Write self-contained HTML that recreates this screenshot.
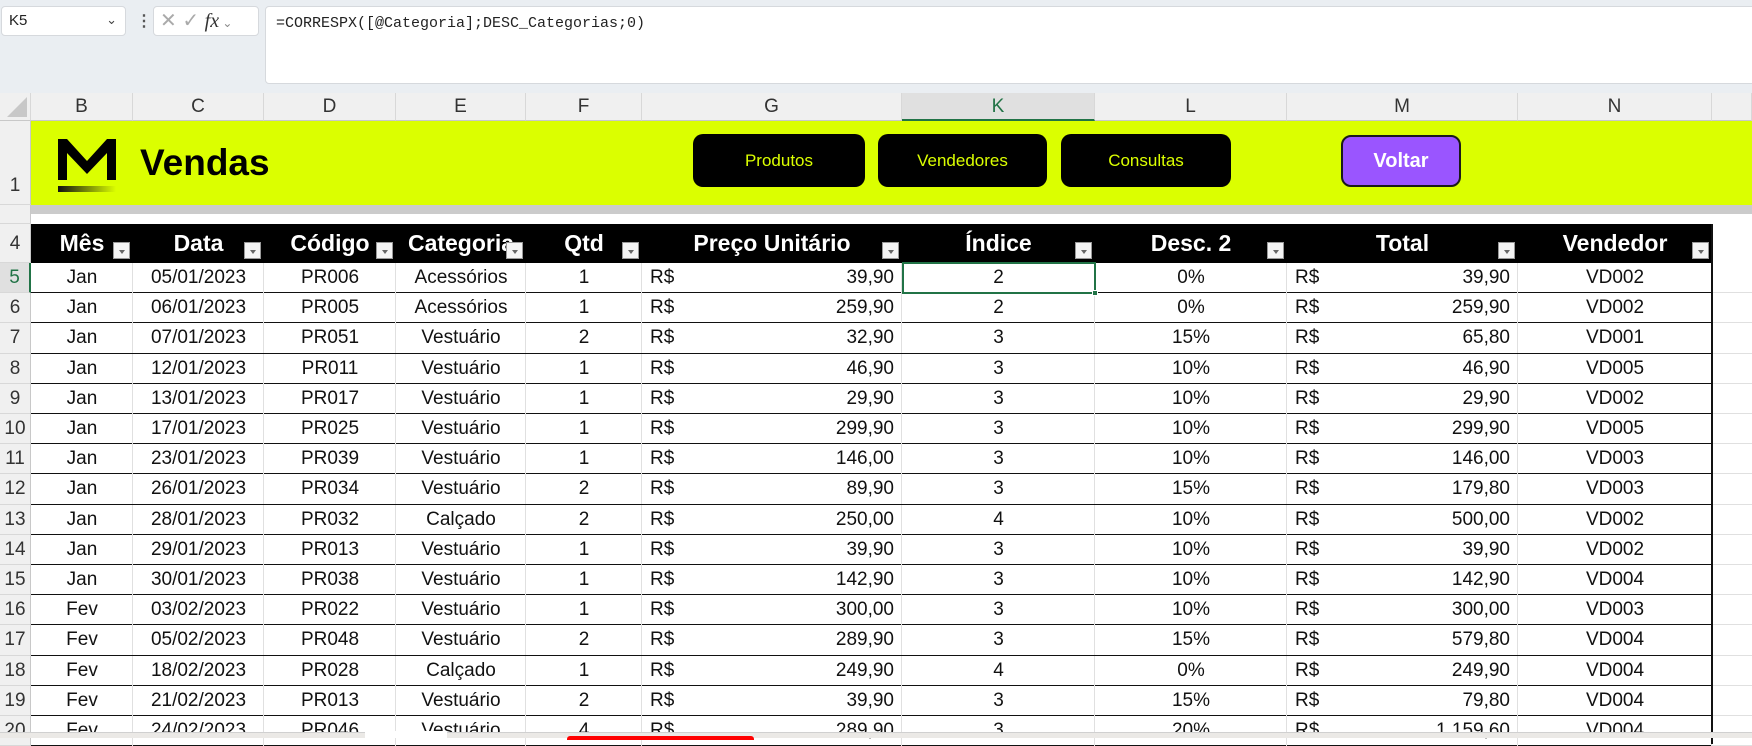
<!DOCTYPE html>
<html><head><meta charset="utf-8"><style>
*{box-sizing:border-box;margin:0;padding:0}
body{width:1752px;height:738px;overflow:hidden;background:#fff;font-family:"Liberation Sans",sans-serif;position:relative}
.a{position:absolute}
.top{left:0;top:0;width:1752px;height:93px;background:#eaeef2}
.box{background:#fff;border:1px solid #d6d9dd;border-radius:4px}
.ch{top:93px;height:28px;background:#f0f0f0;border-bottom:1px solid #c8c8c8;border-right:1px solid #d8d8d8;font-size:19px;color:#333;text-align:center;line-height:28px}
.rh{left:0;width:31px;background:#f0f0f0;border-right:1px solid #c8c8c8;border-bottom:1px solid #d8d8d8;font-size:19px;color:#333;text-align:center}
.btn{top:134px;height:53px;background:#000;border-radius:10px;color:#dbff00;font-size:17px;text-align:center;line-height:53px}
.hd{top:224px;height:39px;background:#000;color:#fff;font-weight:bold;font-size:23px;line-height:39px;text-align:center}
.fl{width:17px;height:17px;background:#f4f4f4;border:1px solid #999;top:18px}
.fl:after{content:"";position:absolute;left:5px;top:7px;border-left:3px solid transparent;border-right:3px solid transparent;border-top:4px solid #666}
.c{font-size:19px;color:#111;line-height:30px;text-align:center;height:30px}
</style></head><body>
<div class="a top"></div>
<div class="a box" style="left:1px;top:6px;width:125px;height:30px;font-size:15px;line-height:28px;padding-left:7px;color:#222">K5<span style="position:absolute;right:8px;top:-1px;font-size:13px;color:#444">&#8964;</span></div>
<div class="a" style="left:136px;top:11px;font-size:16px;color:#555;font-weight:bold">&#8942;</div>
<div class="a box" style="left:153px;top:6px;width:106px;height:30px;color:#aaa;font-size:20px;line-height:28px;padding-left:6px">&#10005; &#10003; <i style="color:#333;font-family:'Liberation Serif',serif;font-size:20px">fx</i><span style="font-size:12px;color:#888"> &#8964;</span></div>
<div class="a box" style="left:265px;top:6px;width:1500px;height:78px;border-radius:4px 0 0 4px;font-family:'Liberation Mono',monospace;font-size:15px;padding:8px 10px;color:#222">=CORRESPX([@Categoria];DESC_Categorias;0)</div>
<!-- column headers -->
<div class="a ch" style="left:0;width:31px"><div style="position:absolute;right:3px;bottom:3px;border-left:20px solid transparent;border-bottom:20px solid #c8c8c8"></div></div>
<div class="a ch" style="left:31px;width:102px">B</div>
<div class="a ch" style="left:133px;width:131px">C</div>
<div class="a ch" style="left:264px;width:132px">D</div>
<div class="a ch" style="left:396px;width:130px">E</div>
<div class="a ch" style="left:526px;width:116px">F</div>
<div class="a ch" style="left:642px;width:260px">G</div>
<div class="a ch" style="left:902px;width:193px;background:#e0e0e0;color:#217346;border-bottom:2px solid #217346">K</div>
<div class="a ch" style="left:1095px;width:192px">L</div>
<div class="a ch" style="left:1287px;width:231px">M</div>
<div class="a ch" style="left:1518px;width:194px">N</div>
<div class="a ch" style="left:1712px;width:40px"></div>
<!-- banner -->
<div class="a" style="left:31px;top:121px;width:1721px;height:84px;background:#dbff00"></div>
<div class="a" style="left:31px;top:205px;width:1721px;height:9px;background:#cbcbcb"></div>
<div class="a rh" style="top:121px;height:84px;line-height:130px">1</div>
<div class="a rh" style="top:205px;height:19px"></div>
<svg class="a" style="left:56px;top:136px" width="62" height="58" viewBox="0 0 62 58"><path d="M2 44V3h9l20 22L51 3h9v41h-9V17L31 38 11 17v27z" fill="#000"/><path d="M2 50h58v6H2z" fill="url(#g)"/><defs><linearGradient id="g"><stop offset="0" stop-color="#111"/><stop offset="1" stop-color="#dbff00"/></linearGradient></defs></svg>
<div class="a" style="left:140px;top:142px;font-size:37px;font-weight:bold;color:#000">Vendas</div>
<div class="a btn" style="left:693px;width:172px">Produtos</div>
<div class="a btn" style="left:878px;width:169px">Vendedores</div>
<div class="a btn" style="left:1061px;width:170px">Consultas</div>
<div class="a btn" style="left:1341px;top:135px;height:52px;width:120px;background:#9a55ff;border:2px solid #1a1a1a;color:#fff;font-weight:bold;font-size:20px;line-height:48px">Voltar</div>
<!-- header row -->
<div class="a rh" style="top:224px;height:39px;line-height:39px">4</div>
<div class="a rh" style="top:263px;height:30px;line-height:30px;color:#217346;background:#e0e0e0;border-right:2px solid #217346">5</div>
<div id="hdr"></div>
<div id="rows"></div>
<div class="a" style="left:902px;top:262px;width:194px;height:32px;border:2px solid #217346"></div>
<div class="a" style="left:1092px;top:290px;width:6px;height:6px;background:#217346;border:1px solid #fff"></div>
<!-- tabs -->
<div class="a" style="left:0;top:732px;width:1752px;height:6px;background:#ebe9e6;border-top:1px solid #d0d0d0"></div>
<div class="a" style="left:365px;top:731px;width:82px;height:7px;background:#fff"></div>
<div class="a" style="left:567px;top:736px;width:187px;height:4px;background:#f00;border-radius:3px 3px 0 0"></div>
<script>
var cols=[[31,102],[133,131],[264,132],[396,130],[526,116],[642,260],[902,193],[1095,192],[1287,231],[1518,194]];
var hn=["Mês","Data","Código","Categoria","Qtd","Preço Unitário","Índice","Desc. 2","Total","Vendedor"];
var h="";
for(var i=0;i<10;i++){var x=cols[i][0],w=cols[i][1];
h+='<div class="a hd" style="left:'+x+'px;width:'+w+'px;overflow:hidden;white-space:nowrap">'+hn[i]+'<div class="a fl" style="left:'+(w-20)+'px"></div></div>';}
document.getElementById("hdr").innerHTML=h;
var d=`Jan 05/01/2023 PR006 Acessórios 1 39,90 2 0% 39,90 VD002
Jan 06/01/2023 PR005 Acessórios 1 259,90 2 0% 259,90 VD002
Jan 07/01/2023 PR051 Vestuário 2 32,90 3 15% 65,80 VD001
Jan 12/01/2023 PR011 Vestuário 1 46,90 3 10% 46,90 VD005
Jan 13/01/2023 PR017 Vestuário 1 29,90 3 10% 29,90 VD002
Jan 17/01/2023 PR025 Vestuário 1 299,90 3 10% 299,90 VD005
Jan 23/01/2023 PR039 Vestuário 1 146,00 3 10% 146,00 VD003
Jan 26/01/2023 PR034 Vestuário 2 89,90 3 15% 179,80 VD003
Jan 28/01/2023 PR032 Calçado 2 250,00 4 10% 500,00 VD002
Jan 29/01/2023 PR013 Vestuário 1 39,90 3 10% 39,90 VD002
Jan 30/01/2023 PR038 Vestuário 1 142,90 3 10% 142,90 VD004
Fev 03/02/2023 PR022 Vestuário 1 300,00 3 10% 300,00 VD003
Fev 05/02/2023 PR048 Vestuário 2 289,90 3 15% 579,80 VD004
Fev 18/02/2023 PR028 Calçado 1 249,90 4 0% 249,90 VD004
Fev 21/02/2023 PR013 Vestuário 2 39,90 3 15% 79,80 VD004
Fev 24/02/2023 PR046 Vestuário 4 289,90 3 20% 1.159,60 VD004`.split("\n");
var r="";
for(var j=0;j<d.length;j++){var v=d[j].split(" ");var y=263+j*30.2;
if(j>0)r+='<div class="a rh" style="top:'+y+'px;height:30.2px;line-height:30px">'+(j+5)+'</div>';
r+='<div class="a" style="left:31px;top:'+y+'px;width:1681px;height:30.2px;border-bottom:1.5px solid #111"></div>';
r+='<div class="a" style="left:1712px;top:'+y+'px;width:40px;height:30.2px;border-bottom:1px solid #e0e0e0"></div>';
for(var i=0;i<10;i++){var x=cols[i][0],w=cols[i][1];
r+='<div class="a" style="left:'+(x+w-1)+'px;top:'+y+'px;width:1px;height:30px;background:#e0e0e0"></div>';
if(i==5||i==8){r+='<div class="a c" style="left:'+(x+8)+'px;top:'+y+'px;text-align:left">R$</div><div class="a c" style="left:'+x+'px;top:'+y+'px;width:'+(w-8)+'px;text-align:right">'+v[i]+'</div>';}
else r+='<div class="a c" style="left:'+x+'px;top:'+y+'px;width:'+w+'px">'+v[i]+'</div>';}
}
r+='<div class="a" style="left:1711px;top:224px;width:2px;height:520px;background:#111"></div>';
document.getElementById("rows").innerHTML=r;
</script>
</body></html>
